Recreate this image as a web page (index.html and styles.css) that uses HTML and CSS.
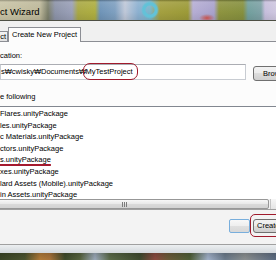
FILE: index.html
```html
<!DOCTYPE html>
<html lang="en">
<head>
  <meta charset="UTF-8">
  <title>Project Wizard</title>
  <link rel="stylesheet" href="styles.css">
</head>
<body>

  <div class="titlebar">
    <span class="title">ct Wizard</span>
  </div>

  <div class="tabs">
    <div class="tab tab-cut">ct</div>
    <div class="tab tab-active">Create New Project</div>
    <div class="tab-rest"></div>
  </div>

  <div class="page">
    <div class="label">cation:</div>
    <div class="path-row">
      <div class="path-input">s₩cwisky₩Documents₩<span class="circle">MyTestProject</span></div>
      <button class="btn btn-browse">Browse...</button>
    </div>

    <div class="label following">e following</div>

    <div class="listbox">
      <ul class="items">
        <li>Flares.unityPackage</li>
        <li>les.unityPackage</li>
        <li>c Materials.unityPackage</li>
        <li>ctors.unityPackage</li>
        <li><span class="mark">s.unityPackage</span></li>
        <li>xes.unityPackage</li>
        <li>lard Assets (Mobile).unityPackage</li>
        <li><span class="mark">in Assets.unityPackage</span></li>
      </ul>
      <div class="hscroll">
        <div class="thumb">
          <svg width="6" height="5" viewBox="0 0 6 5">
            <path d="M0.5 0v5M2.5 0v5M4.5 0v5" stroke="#7b7b7b" stroke-width="1"/>
          </svg>
        </div>
        <div class="arrow"></div>
      </div>
    </div>
  </div>

  <div class="actions">
    <button class="btn btn-blank"></button>
    <div class="ring">
      <button class="btn btn-create">Create</button>
    </div>
  </div>

  <div class="frame"></div>
  <div class="desk"></div>

</body>
</html>
```

FILE: styles.css
```css
body {
  margin: 0;
  width: 276px;
  height: 260px;
  overflow: hidden;
  font-family: "Liberation Sans", Arial, sans-serif;
  font-size: 7.5px;
  color: #000;
  background-color: #f0f0f0;
}

/* aero glass title bar, blurred desktop behind it */
.titlebar {
  height: 20px;
  border-bottom: 1px solid #4d4f44;
  display: flex;
  align-items: center;
  background:
    radial-gradient(ellipse 8px 4px at 207px 18px, #c8524c, transparent),
    radial-gradient(circle at 150px 10px, transparent 4px, #62c2d8 5px, #62c2d8 7px, transparent 9px),
    linear-gradient(rgba(0,0,0,0.25), rgba(255,255,255,0.1) 2px, rgba(255,255,255,0) 60%, rgba(0,0,0,0.08)),
    linear-gradient(to right,
      #c9c4a6 0, #bdb89a 40px, #7c7f6a 48px, #8c93a8 55px, #9aa0b8 72px,
      #a9a845 78px, #aeae40 95px, #6f94b8 100px, #7fa0c0 115px, #c0c8d8 125px,
      #8cb0d0 138px, #7ab6cc 150px, #a4a040 160px, #9c9a38 188px, #b6aed4 193px,
      #a9a2cc 214px, #8e9440 219px, #86903e 243px, #72a09e 248px, #7fa2a6 261px,
      #c6bedc 265px, #cfc8e0 276px);
}

.title {
  font-size: 9.5px;
  padding-top: 2px;
}

.tabs {
  display: flex;
  align-items: flex-end;
  height: 21px;
}

.tab {
  box-sizing: border-box;
  white-space: nowrap;
  overflow: hidden;
}

.tab-cut {
  width: 8px;
  height: 11px;
  border: 1px solid #8c8e94;
  border-left: 0;
  padding-right: 1px;
  text-align: right;
  line-height: 10px;
  background: linear-gradient(#f4f4f4, #e2e2e2);
}

.tab-active {
  width: 73px;
  height: 15px;
  border: 1px solid #8c8e94;
  border-bottom: 0;
  text-align: center;
  line-height: 13px;
  background-color: #fcfcfc;
}

.tab-rest {
  flex: 1;
  border-bottom: 1px solid #8c8e94;
}

.page {
  background-color: #fcfcfc;
  padding-top: 8px;
}

.label {
  line-height: 12px;
  white-space: nowrap;
}

.path-row {
  display: flex;
  align-items: flex-start;
  margin-top: 2px;
}

.path-input {
  flex-shrink: 0;
  box-sizing: border-box;
  width: 246px;
  height: 16px;
  border: 1px solid #c8ccd2;
  border-top-color: #abadb3;
  background-color: #fff;
  line-height: 14px;
  white-space: nowrap;
}

/* red annotation marks drawn over the screenshot */
.circle {
  border: 1.5px solid #a01a2c;
  border-radius: 7px;
  padding: 3px 4px 3px 2px;
  margin-left: -3.5px;
}

.mark {
  text-decoration: underline #a51a2e;
  text-decoration-thickness: 1.5px;
  text-underline-offset: 1.5px;
}

.btn {
  font: inherit;
  color: #000;
  box-sizing: border-box;
  flex-shrink: 0;
  margin: 0;
  padding: 0;
  border: 1px solid #707070;
  border-radius: 3px;
  background: linear-gradient(#f2f2f2, #ebebeb 50%, #dddddd 50%, #cfcfcf);
  text-align: left;
}

.btn-browse {
  margin: 2px 0 0 7px;
  width: 72px;
  height: 15px;
  padding-left: 9px;
}

.following {
  margin-top: 10px;
}

.listbox {
  margin-top: 3px;
  border-top: 1px solid #828790;
  border-bottom: 1px solid #a0a0a0;
  background-color: #fff;
}

.items {
  list-style: none;
  margin: 0;
  padding: 1px 0 0;
  height: 92px;
  box-sizing: border-box;
  overflow: hidden;
  line-height: 11.6px;
  white-space: nowrap;
}

.hscroll {
  display: flex;
  width: 288px;
  height: 10px;
  background-color: #f0f0f0;
}

.thumb {
  flex: 1;
  margin-left: -20px;
  box-sizing: border-box;
  border: 1px solid #979797;
  border-radius: 2px;
  background: linear-gradient(#f7f7f7, #e8e8e8 50%, #dadada 50%, #d2d2d2);
  display: flex;
  align-items: center;
  justify-content: center;
}

.arrow {
  width: 17px;
  margin-left: 1px;
  border-left: 1px solid #c4c4c4;
  background: linear-gradient(#f6f6f6, #e4e4e4);
}

.actions {
  box-sizing: border-box;
  height: 35px;
  display: flex;
  align-items: flex-start;
  padding: 4px 0 0 229px;
  border-bottom: 1px solid #a0a0a0;
  background-color: #f3f3f3;
}

.btn-blank {
  margin-top: 5px;
  width: 21px;
  height: 14px;
  border-color: #78aedc;
  border-radius: 2px;
  background: linear-gradient(#f8f8f8, #eeeeee 50%, #e0e0e0 50%, #d8d8d8);
}

.ring {
  display: flex;
  flex-shrink: 0;
  border: 1.5px solid #a01a2c;
  border-radius: 5px;
  padding: 3.5px 2px;
}

.btn-create {
  width: 70px;
  height: 14px;
  padding-left: 3px;
}

.frame {
  height: 8px;
  background: linear-gradient(#eceff1, #d2d7db);
}

.desk {
  height: 7px;
  background:
    linear-gradient(rgba(0,0,0,0.15), rgba(0,0,0,0)),
    linear-gradient(to right,
      #3a4526 0, #4b5430 25px, #b07a38 40px, #a8733a 50px, #3d4a2a 65px,
      #56633e 80px, #9aa8b8 95px, #5a6a48 110px, #3e4a2e 140px, #8a4a40 155px,
      #6a5a38 168px, #4e5e36 190px, #a0b0c8 208px, #6a7a8a 225px, #8a8f90 245px,
      #5a6a80 276px);
}
```
